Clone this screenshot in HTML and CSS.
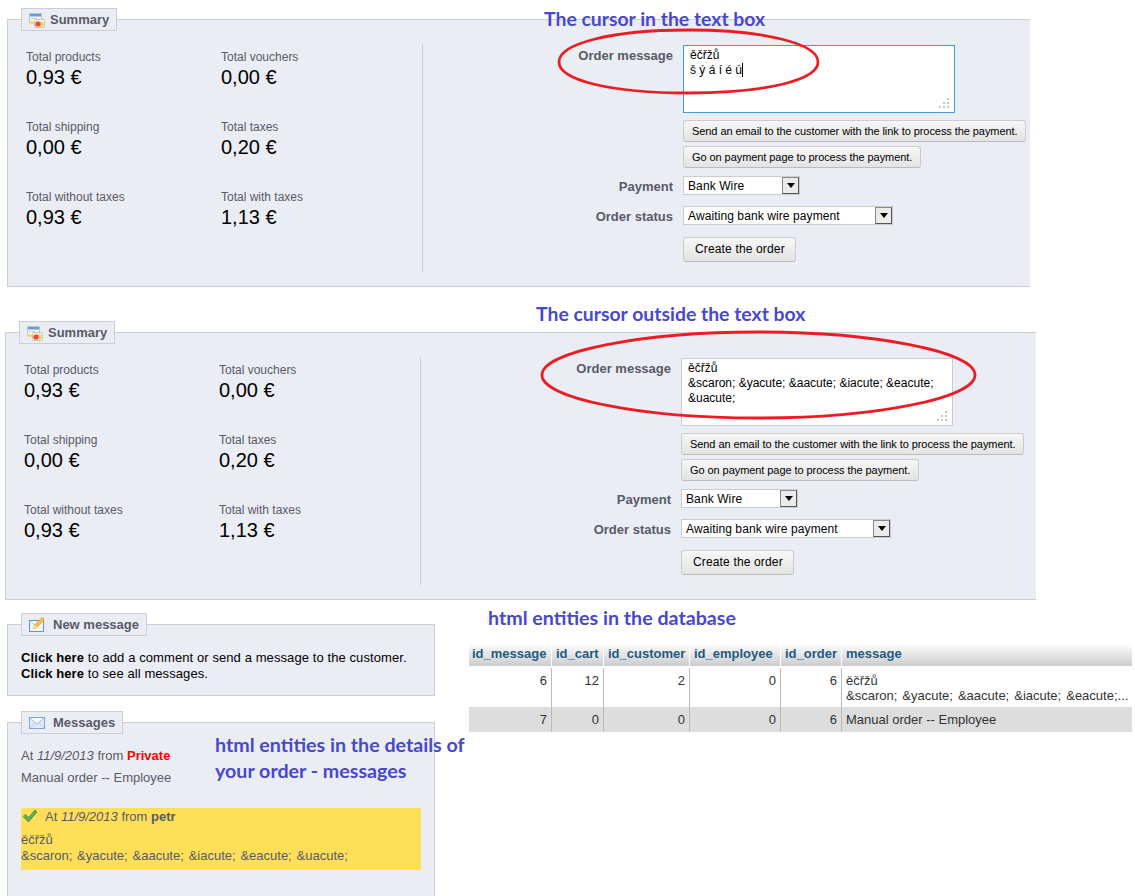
FILE: index.html
```html
<!DOCTYPE html>
<html lang="en">
<head>
<meta charset="utf-8">
<title>Order message entities</title>
<link rel="stylesheet" href="styles.css">
</head>
<body>
<div class="canvas">

  <section class="panel summary-a">
    <div class="legend legend-summary">
      <svg class="icon" viewBox="0 0 16 16"><rect x="0.5" y="1.5" width="12" height="9" fill="#f4f8fc" stroke="#b9c6d6"/><rect x="1" y="2" width="11" height="2.5" fill="#6d9bd3"/><rect x="2" y="6" width="6" height="1" fill="#c3d3e6"/><rect x="0.5" y="9" width="4" height="3" fill="#f6d77a"/><rect x="5.5" y="7.5" width="10" height="8" rx="1" fill="#fbf6e4" stroke="#c9c3ae"/><rect x="6.5" y="9.5" width="8" height="5" fill="#f3cd70"/><circle cx="9" cy="12" r="2.6" fill="#ea4a3a"/></svg>
      <span>Summary</span>
    </div>
    <div class="summary">
      <div class="totals">
        <div><div class="t-label">Total products</div><div class="t-value">0,93 €</div></div>
        <div><div class="t-label">Total vouchers</div><div class="t-value">0,00 €</div></div>
        <div><div class="t-label">Total shipping</div><div class="t-value">0,00 €</div></div>
        <div><div class="t-label">Total taxes</div><div class="t-value">0,20 €</div></div>
        <div><div class="t-label">Total without taxes</div><div class="t-value">0,93 €</div></div>
        <div><div class="t-label">Total with taxes</div><div class="t-value">1,13 €</div></div>
      </div>
      <div class="order">
        <div class="row row-message">
          <div class="f-label">Order message</div>
          <div class="textbox textbox-focus">
            ěčřžů<br>š ý á í é ú<span class="caret"></span>
            <svg class="grip" viewBox="0 0 12 12"><g fill="#c4c6cc"><rect x="9" y="1" width="2" height="2"/><rect x="5" y="5" width="2" height="2"/><rect x="9" y="5" width="2" height="2"/><rect x="1" y="9" width="2" height="2"/><rect x="5" y="9" width="2" height="2"/><rect x="9" y="9" width="2" height="2"/></g></svg>
          </div>
        </div>
        <div class="row row-btn1"><div class="f-label"></div><div class="btn">Send an email to the customer with the link to process the payment.</div></div>
        <div class="row row-btn2"><div class="f-label"></div><div class="btn">Go on payment page to process the payment.</div></div>
        <div class="row row-pay">
          <div class="f-label">Payment</div>
          <div class="select select-pay"><span class="select-text">Bank Wire</span><span class="arrow"><svg viewBox="0 0 8 5"><path d="M0 0h8L4 5z"/></svg></span></div>
        </div>
        <div class="row row-status">
          <div class="f-label">Order status</div>
          <div class="select select-status"><span class="select-text">Awaiting bank wire payment</span><span class="arrow"><svg viewBox="0 0 8 5"><path d="M0 0h8L4 5z"/></svg></span></div>
        </div>
        <div class="row row-create"><div class="f-label"></div><div class="btn btn-create">Create the order</div></div>
      </div>
    </div>
  </section>

  <section class="panel summary-b">
    <div class="legend legend-summary">
      <svg class="icon" viewBox="0 0 16 16"><rect x="0.5" y="1.5" width="12" height="9" fill="#f4f8fc" stroke="#b9c6d6"/><rect x="1" y="2" width="11" height="2.5" fill="#6d9bd3"/><rect x="2" y="6" width="6" height="1" fill="#c3d3e6"/><rect x="0.5" y="9" width="4" height="3" fill="#f6d77a"/><rect x="5.5" y="7.5" width="10" height="8" rx="1" fill="#fbf6e4" stroke="#c9c3ae"/><rect x="6.5" y="9.5" width="8" height="5" fill="#f3cd70"/><circle cx="9" cy="12" r="2.6" fill="#ea4a3a"/></svg>
      <span>Summary</span>
    </div>
    <div class="summary">
      <div class="totals">
        <div><div class="t-label">Total products</div><div class="t-value">0,93 €</div></div>
        <div><div class="t-label">Total vouchers</div><div class="t-value">0,00 €</div></div>
        <div><div class="t-label">Total shipping</div><div class="t-value">0,00 €</div></div>
        <div><div class="t-label">Total taxes</div><div class="t-value">0,20 €</div></div>
        <div><div class="t-label">Total without taxes</div><div class="t-value">0,93 €</div></div>
        <div><div class="t-label">Total with taxes</div><div class="t-value">1,13 €</div></div>
      </div>
      <div class="order">
        <div class="row row-message">
          <div class="f-label">Order message</div>
          <div class="textbox">
            ěčřžů<br>&amp;scaron; &amp;yacute; &amp;aacute; &amp;iacute; &amp;eacute;<br>&amp;uacute;
            <svg class="grip" viewBox="0 0 12 12"><g fill="#c4c6cc"><rect x="9" y="1" width="2" height="2"/><rect x="5" y="5" width="2" height="2"/><rect x="9" y="5" width="2" height="2"/><rect x="1" y="9" width="2" height="2"/><rect x="5" y="9" width="2" height="2"/><rect x="9" y="9" width="2" height="2"/></g></svg>
          </div>
        </div>
        <div class="row row-btn1"><div class="f-label"></div><div class="btn">Send an email to the customer with the link to process the payment.</div></div>
        <div class="row row-btn2"><div class="f-label"></div><div class="btn">Go on payment page to process the payment.</div></div>
        <div class="row row-pay">
          <div class="f-label">Payment</div>
          <div class="select select-pay"><span class="select-text">Bank Wire</span><span class="arrow"><svg viewBox="0 0 8 5"><path d="M0 0h8L4 5z"/></svg></span></div>
        </div>
        <div class="row row-status">
          <div class="f-label">Order status</div>
          <div class="select select-status"><span class="select-text">Awaiting bank wire payment</span><span class="arrow"><svg viewBox="0 0 8 5"><path d="M0 0h8L4 5z"/></svg></span></div>
        </div>
        <div class="row row-create"><div class="f-label"></div><div class="btn btn-create">Create the order</div></div>
      </div>
    </div>
  </section>

  <section class="panel new-message">
    <div class="legend legend-wide">
      <svg class="icon" viewBox="0 0 16 16"><rect x="0.5" y="3.5" width="14" height="11" fill="#f4f8fd" stroke="#5f92cf"/><path d="M1 4l6 5 6-5" fill="none" stroke="#b6cdea"/><path d="M4 12l1.500-4L12.500 1c1.200-.9 3.300 1 2.300 2.300L8 10.500z" fill="#f4c14f" stroke="#d59a2e" stroke-width=".7"/><path d="M4 12l1.500-4 2.500 2.500z" fill="#f7e3b4"/></svg>
      <span>New message</span>
    </div>
    <p class="msg-text"><b>Click here</b> to add a comment or send a message to the customer.<br><b>Click here</b> to see all messages.</p>
  </section>

  <section class="panel messages">
    <div class="legend legend-wide">
      <svg class="icon" viewBox="0 0 16 16"><rect x="0.5" y="2.500" width="15" height="11" fill="#dfe9f7" stroke="#7ea6d8"/><path d="M1 3l7 6 7-6" fill="#f6f9fd" stroke="#9dbce3"/><path d="M1 13l5-5.500M15 13l-5-5.500" fill="none" stroke="#b5cce9"/></svg>
      <span>Messages</span>
    </div>
    <div class="msg-private">At <i>11/9/2013</i> from <b class="private">Private</b></div>
    <div class="msg-manual">Manual order -- Employee</div>
    <div class="msg-yellow">
      <div class="msg-head">
        <svg class="check" viewBox="0 0 16 14"><path d="M1 7.500l2.500-2 3 3L13 1l2 2-8.500 10z" fill="#5fb04f" stroke="#3f8f3a" stroke-width=".8"/></svg>
        <span>At <i>11/9/2013</i> from <b>petr</b></span>
      </div>
      <div class="msg-body">ěčřžů<br>&amp;scaron; &amp;yacute; &amp;aacute; &amp;iacute; &amp;eacute; &amp;uacute;</div>
    </div>
  </section>

  <table class="db">
    <colgroup><col class="c1"><col class="c2"><col class="c3"><col class="c4"><col class="c5"><col class="c6"></colgroup>
    <thead>
      <tr><th>id_message</th><th>id_cart</th><th>id_customer</th><th>id_employee</th><th>id_order</th><th>message</th></tr>
    </thead>
    <tbody>
      <tr><td class="num">6</td><td class="num">12</td><td class="num">2</td><td class="num">0</td><td class="num">6</td><td>ěčřžů<br>&amp;scaron; &amp;yacute; &amp;aacute; &amp;iacute; &amp;eacute;...</td></tr>
      <tr class="alt"><td class="num">7</td><td class="num">0</td><td class="num">0</td><td class="num">0</td><td class="num">6</td><td>Manual order -- Employee</td></tr>
    </tbody>
  </table>

  <h2 class="note note-1">The cursor in the text box</h2>
  <h2 class="note note-2">The cursor outside the text box</h2>
  <h2 class="note note-3">html entities in the database</h2>
  <h2 class="note note-4">html entities in the details of<br>your order - messages</h2>

  <svg class="marks" viewBox="0 0 1135 896">
    <path d="M559 62C559 44 610 30 688 30C766 30 818 44 818 62C818 80 766 93 688 93C610 93 559 80 559 62Z"/>
    <path d="M542 375C542 352 640 332 758 332C876 332 975 352 975 375C975 398 876 418 758 418C640 418 542 398 542 375Z"/>
  </svg>
</div>
</body>
</html>
```

FILE: styles.css
```css
* { box-sizing: border-box; }
html, body { margin: 0; padding: 0; height: 896px; overflow: hidden; background: #fff; }
body { font-family: "Liberation Sans", Arial, sans-serif; font-size: 12px; color: #585a69; }

.canvas { position: relative; width: 1135px; height: 896px; overflow: hidden; }

.panel {
  position: absolute;
  background: #ebedf4;
  border: 1px solid #ccced7;
}
.summary-a { left: 7px; top: 19px; width: 1023px; height: 268px; border-right: 0; }
.summary-b { left: 5px; top: 332px; width: 1031px; height: 268px; border-right: 0; }
.new-message { left: 7px; top: 624px; width: 428px; height: 72px; padding: 25px 13px 0; }
.messages { left: 7px; top: 722px; width: 428px; height: 200px; padding: 25px 13px 0; font-size: 13px; }

.legend {
  position: absolute;
  left: 13px;
  top: -12px;
  height: 23px;
  display: flex;
  align-items: center;
  padding: 0 7px;
  background: #ebedf4;
  border: 1px solid #ccced7;
  font-size: 13px;
  font-weight: bold;
  white-space: nowrap;
}
.legend-summary { gap: 5px; }
.legend-wide { gap: 8px; }
.icon { width: 16px; height: 16px; flex: none; }

.summary { display: flex; margin-top: 24px; height: 228px; }
.totals {
  flex: none;
  width: 415px;
  padding: 6px 0 0 18px;
  border-right: 1px solid #ccced7;
  display: grid;
  grid-template-columns: 195px 195px;
  grid-auto-rows: 70px;
}
.t-label { line-height: 15px; }
.t-value { font-size: 20px; line-height: 24px; color: #000; }

.order { padding-top: 1px; }
.row { display: flex; align-items: center; }
.row-message { align-items: flex-start; }
.row-btn1 { margin-top: 7px; }
.row-btn2 { margin-top: 4px; }
.row-pay { margin-top: 8px; }
.row-status { margin-top: 11px; }
.row-create { margin-top: 12px; }
.f-label {
  width: 250px;
  margin-right: 10px;
  flex: none;
  text-align: right;
  font-size: 13px;
  font-weight: bold;
  padding-top: 2px;
}
.row-message .f-label { padding-top: 3px; }

.textbox {
  position: relative;
  width: 272px;
  height: 68px;
  padding: 2px 6px 0;
  background: #fff;
  border: 1px solid #ccc;
  color: #000;
  line-height: 15px;
}
.textbox-focus { border-color: #3f9bdc; }
.caret { display: inline-block; width: 1px; height: 14px; background: #000; vertical-align: -3px; }
.grip { position: absolute; right: 4px; bottom: 3px; width: 12px; height: 12px; }

.btn {
  height: 22px;
  padding: 0 8px;
  line-height: 21px;
  font-size: 11px;
  letter-spacing: -0.07px;
  color: #000;
  white-space: nowrap;
  background: linear-gradient(#f7f7f7, #e3e3e3);
  border: 1px solid #ccc;
  border-bottom-color: #bbb;
  border-radius: 3px;
}
.btn-create { height: 25px; padding: 0 10px 0 11px; line-height: 23px; font-size: 12px; letter-spacing: 0.15px; }

.select {
  display: flex;
  justify-content: space-between;
  height: 19px;
  background: #fff;
  border: 1px solid #ccc;
  color: #000;
  line-height: 19px;
}
.select-pay { width: 117px; }
.select-status { width: 210px; }
.select-text { padding-left: 4px; letter-spacing: 0.1px; }
.arrow {
  width: 17px;
  height: 17px;
  display: flex;
  align-items: center;
  justify-content: center;
  background: #ebebeb;
  border: 1px solid #555;
  border-top-color: #888;
  border-left-color: #888;
}
.arrow svg { width: 8px; height: 5px; fill: #000; }

.msg-text { margin: 0; font-size: 13px; letter-spacing: 0.09px; line-height: 16px; color: #000; }
.msg-text b { font-weight: bold; }
.msg-private { line-height: 15px; }
.private { color: #f00; }
.msg-manual { line-height: 15px; margin-top: 7px; }
.msg-yellow { width: 400px; height: 62px; margin-top: 23px; background: #ffdf57; }
.msg-head { display: flex; align-items: center; gap: 7px; height: 16px; padding-left: 1px; }
.check { width: 16px; height: 14px; flex: none; }
.msg-body { margin-top: 8px; line-height: 16px; word-spacing: 1.2px; }

.db {
  position: absolute;
  left: 469px;
  top: 643px;
  width: 663px;
  table-layout: fixed;
  border-collapse: separate;
  border-spacing: 0;
  font-size: 13px;
  color: #333;
}
.c1 { width: 83px; } .c2 { width: 52px; } .c3 { width: 86px; }
.c4 { width: 91px; } .c5 { width: 61px; } .c6 { width: 290px; }
.db th {
  height: 25px;
  padding: 0 3px 4px 4px;
  text-align: left;
  font-size: 13px;
  font-weight: bold;
  color: #235a81;
  background: linear-gradient(#fff, #ccc);
  background-size: 100% 23px;
  background-repeat: no-repeat;
  border-right: 1px solid #fff;
  white-space: nowrap;
  overflow: hidden;
}
.db th:first-child { padding-left: 3px; }
.db td {
  padding: 5px 4px 4px 4px;
  line-height: 15px;
  vertical-align: top;
  border-right: 1px solid #bbb;
  white-space: nowrap;
  word-spacing: 1.4px;
}
.db td.num { text-align: right; }
.db th:last-child, .db td:last-child { border-right: 0; }
.db .alt td { background: #ddd; padding-top: 5px; padding-bottom: 5px; word-spacing: 0; }

.note {
  position: absolute;
  margin: 0;
  font-family: Lato, "Open Sans", sans-serif;
  font-size: 19.4px;
  font-weight: bold;
  line-height: 26px;
  color: #4848cf;
  white-space: nowrap;
}
.note-1 { left: 544px; top: 6px; }
.note-2 { left: 536px; top: 301px; }
.note-3 { left: 488px; top: 605px; font-size: 19.65px; }
.note-4 { left: 215px; top: 732px; font-size: 19.65px; }

.marks {
  position: absolute;
  left: 0;
  top: 0;
  width: 1135px;
  height: 896px;
  pointer-events: none;
  fill: none;
  stroke: #ed1c24;
  stroke-width: 2.8;
}
```
